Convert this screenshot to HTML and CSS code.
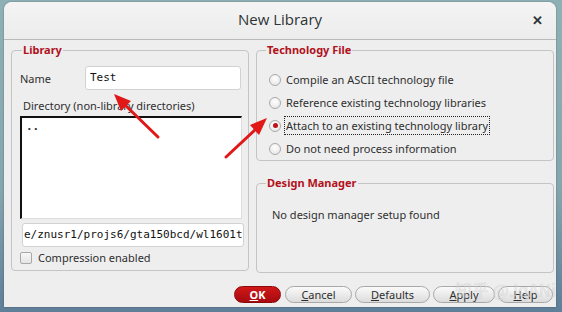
FILE: index.html
```html
<!DOCTYPE html>
<html>
<head>
<meta charset="utf-8">
<link rel="stylesheet" href="styles.css">
</head>
<body>
<div class="desk">
  <div class="win">
    <div class="titlebar">
      <span class="title">New Library</span>
      <span class="close">✕</span>
    </div>
    <div class="content">
      <div class="cols">
        <fieldset class="grp lib">
          <legend>Library</legend>
          <div class="namerow">
            <span class="lbl">Name</span>
            <div class="entry name">Test</div>
          </div>
          <div class="dirlbl">Directory (non-library directories)</div>
          <div class="dirlist">..</div>
          <div class="entry path">e/znusr1/projs6/gta150bcd/wl1601t</div>
          <label class="chk"><span class="box"></span>Compression enabled</label>
        </fieldset>
        <div class="right">
          <fieldset class="grp tech">
            <legend>Technology File</legend>
            <div class="radio"><span class="rb"></span><span class="rl">Compile an ASCII technology file</span></div>
            <div class="radio"><span class="rb"></span><span class="rl">Reference existing technology libraries</span></div>
            <div class="radio on"><span class="rb"></span><span class="rl focus">Attach to an existing technology library</span></div>
            <div class="radio"><span class="rb"></span><span class="rl">Do not need process information</span></div>
          </fieldset>
          <fieldset class="grp dm">
            <legend>Design Manager</legend>
            <div class="dmtext">No design manager setup found</div>
          </fieldset>
        </div>
      </div>
      <div class="buttons">
        <button class="btn ok"><u>O</u>K</button>
        <button class="btn cancel"><u>C</u>ancel</button>
        <button class="btn defaults"><u>D</u>efaults</button>
        <button class="btn apply"><u>A</u>pply</button>
        <button class="btn help"><u>H</u>elp</button>
      </div>
    </div>
  </div>
  <svg class="arrows" width="562" height="312" viewBox="0 0 562 312">
    <g stroke="#e01818" stroke-width="3" fill="#e01818" stroke-linecap="round">
      <line x1="158" y1="137" x2="124" y2="104"/>
      <polygon points="114,94 131,101 121,111" stroke="none"/>
      <line x1="226" y1="157" x2="257" y2="128"/>
      <polygon points="267,118 259,135 250,125" stroke="none"/>
    </g>
  </svg>
  <div class="mark">知乎 @JqANi</div>
</div>
</body>
</html>
```
FILE: styles.css
```css
* { box-sizing: border-box; }
html, body { margin: 0; padding: 0; }
body {
  width: 562px; height: 312px; overflow: hidden;
  font-family: "Noto Sans", "Open Sans", sans-serif;
  font-size: 11px; color: #2e2e2e;
}
.desk {
  position: relative;
  width: 562px; height: 312px;
  background: linear-gradient(180deg, #8fb0b4 0%, #86a6ae 60%, #5f7e98 100%);
  padding: 2px 6px 0 4px;
}
.win {
  width: 552px; height: 305px;
  background: #eeeeee;
  border-radius: 8px 8px 0 0;
  box-shadow: 0 0 2px rgba(0,0,0,0.35);
  display: flex; flex-direction: column;
  overflow: hidden;
}
.titlebar {
  height: 38px; flex: none;
  background: linear-gradient(#f4f4f4, #ececec);
  border-bottom: 1px solid #b9b9b9;
  display: flex; align-items: center; justify-content: center;
  padding-bottom: 3px;
  position: relative;
}
.title { font-size: 15px; color: #2e3436; font-family: "Open Sans", "Noto Sans", sans-serif; }
.close {
  position: absolute; right: 13px; top: 9px;
  font-size: 13px; font-weight: bold; color: #2e3436;
}
.content {
  flex: 1; display: flex; flex-direction: column;
  padding: 3px 0 0 7px;
}
.cols { display: flex; gap: 7px; align-items: flex-start; }
.grp {
  margin: 0; border: 1px solid #c4c4c4; border-radius: 4px;
  padding: 0;
}
.grp legend {
  color: #b1121c; font-weight: bold; font-size: 11px;
  padding: 0 1px;
  line-height: 14px;
}
.lib { width: 238px; height: 228px; padding: 9px 4px 0 8px; }
.lib legend { margin-left: 2px; }
.namerow { display: flex; align-items: center; height: 24px; }
.lbl { width: 65px; font-size: 11px; }
.entry {
  background: #fff; border: 1px solid #d2d2d2; border-radius: 3px;
  font-family: "DejaVu Sans Mono", monospace; font-size: 11px;
  color: #111;
}
.name { width: 156px; height: 24px; padding: 4px 0 0 4px; }
.dirlbl { margin-top: 8px; margin-left: 3px; font-size: 11px; height: 16px; }
.dirlist {
  margin-top: 2px; width: 222px; height: 103px;
  background: #fff;
  border-left: 2px solid #111; border-top: 2px solid #111;
  border-right: 1px solid #ddd; border-bottom: 1px solid #ddd;
  font-family: "DejaVu Sans Mono", monospace; font-weight: bold; font-size: 11px;
  padding: 2px 0 0 4px; line-height: 14px;
}
.path { width: 222px; height: 24px; margin-top: 4px; margin-left: 2px; padding: 4px 0 0 1px; }
.chk { display: flex; align-items: center; margin-top: 3px; font-size: 11px; height: 15px; }
.box {
  width: 12px; height: 12px; border: 1px solid #a8a8a8; border-radius: 2px;
  background: linear-gradient(#f8f8f8, #e4e4e4); margin-right: 6px;
}
.right { display: flex; flex-direction: column; gap: 15px; padding-top: 0; }
.tech { width: 298px; height: 118px; padding: 11px 0 0 12px; }
.tech legend { margin-left: -3px; }
.radio { display: flex; align-items: center; height: 23px; font-size: 11px; }
.rb {
  width: 12px; height: 12px; border-radius: 50%;
  border: 1px solid #a9a9a9;
  background: radial-gradient(circle at 50% 35%, #ffffff, #e2e2e2);
  margin-right: 6px; flex: none; position: relative;
}
.on .rb::after {
  content: ""; position: absolute; left: 2.5px; top: 2.5px;
  width: 5px; height: 5px; border-radius: 50%; background: #c0101a;
}
.rl { padding: 1px 1px; border: 1px dotted transparent; margin-left: -3px; }
.focus { border-color: #222; }
.dm { width: 298px; height: 97px; padding: 17px 0 0 15px; }
.dm legend { margin-left: -6px; }
.dmtext { font-size: 11px; }
.buttons {
  display: flex; justify-content: flex-end; gap: 3px;
  margin-top: 13px; padding-right: 3px;
}
.btn {
  height: 17px; border-radius: 9px; border: 1px solid #a8a8a8;
  background: linear-gradient(#fafafa, #dcdcdc);
  font-family: "Noto Sans", sans-serif; font-size: 11px; color: #2e2e2e;
  padding: 0; line-height: 14px;
}
.ok { width: 47px; background: linear-gradient(#d01818, #a80a10); border-color: #8a0a0a; color: #fff; font-weight: bold; margin-right: 1px; }
.cancel { width: 67px; }
.defaults { width: 75px; }
.apply { width: 62px; }
.help { width: 55px; }
.arrows { position: absolute; left: 0; top: 0; pointer-events: none; }
.mark {
  position: absolute; left: 455px; top: 277px;
  font-size: 17px; color: rgba(255,255,255,0.5);
  font-family: "Noto Sans CJK SC", sans-serif;
  text-shadow: 0 0 1px rgba(0,0,0,0.2);
}
```
